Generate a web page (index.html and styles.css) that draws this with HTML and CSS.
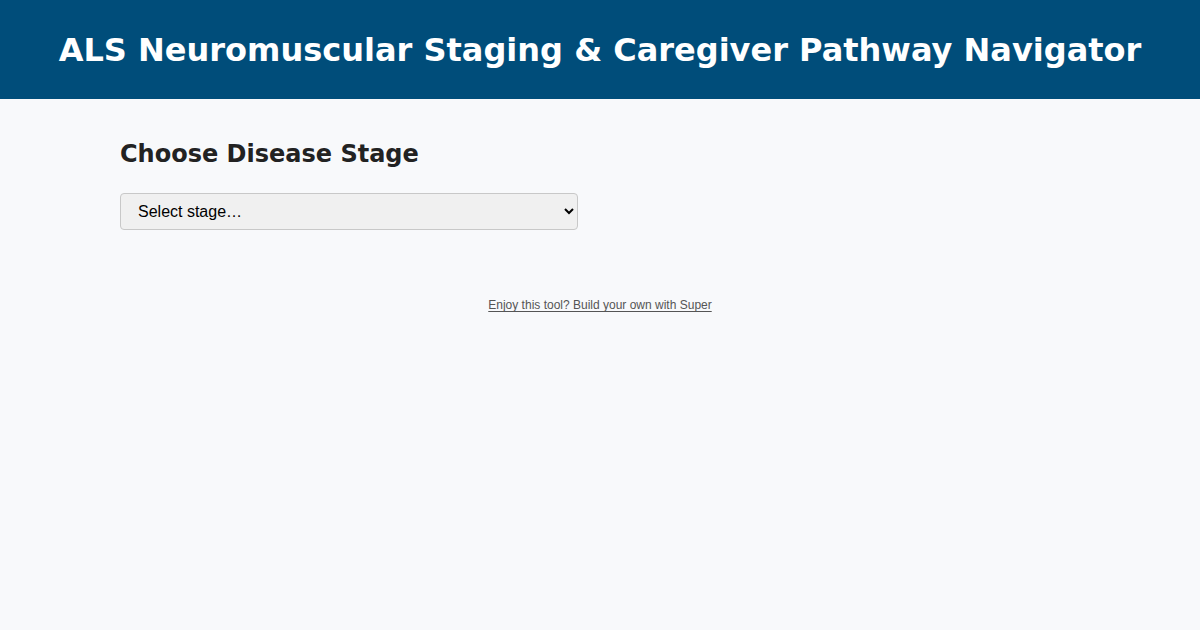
FILE: index.html
```html
<!DOCTYPE html>
<html lang="en">
<head>
<meta charset="utf-8">
<title>ALS Neuromuscular Staging &amp; Caregiver Pathway Navigator</title>
<link rel="stylesheet" href="styles.css">
</head>
<body>
<header class="site-header">
  <h1 class="site-title">ALS Neuromuscular Staging &amp; Caregiver Pathway Navigator</h1>
</header>
<main class="main">
  <section class="stage-section">
    <h2 class="section-title">Choose Disease Stage</h2>
    <select class="stage-select">
      <option>Select stage…</option>
      <option>Early</option>
      <option>Middle</option>
      <option>Late</option>
    </select>
  </section>
  <footer class="footer">
    <a class="footer-link" href="#">Enjoy this tool? Build your own with Super</a>
  </footer>
</main>
</body>
</html>
```
FILE: styles.css
```css
html, body {
  margin: 0;
  padding: 0;
}
body {
  background: #f8f9fb;
  font-family: "DejaVu Sans", sans-serif;
  color: #222;
  min-height: 630px;
}
.site-header {
  background: #004d7a;
  color: #fff;
  height: 99px;
  display: flex;
  align-items: center;
  justify-content: center;
}
.site-title {
  margin: 0;
  font-size: 32px;
  font-weight: bold;
  text-align: center;
}
.main {
  max-width: 960px;
  margin: 0 auto;
  padding: 39px 0 0;
}
.section-title {
  margin: 0 0 23px;
  font-size: 24px;
  font-weight: bold;
  color: #222;
  line-height: 32px;
}
.stage-select {
  width: 458px;
  height: 37px;
  font-family: "Liberation Sans", Arial, sans-serif;
  font-size: 16px;
  padding: 0 6px 0 13px;
  background: #f0f0f0;
  border: 1px solid #c8c8c8;
  border-radius: 4px;
  color: #000;
}
.footer {
  text-align: center;
  margin-top: 64px;
}
.footer-link {
  font-family: "Liberation Sans", Arial, sans-serif;
  font-size: 12px;
  color: #555;
  text-underline-offset: 2px;
}
```
